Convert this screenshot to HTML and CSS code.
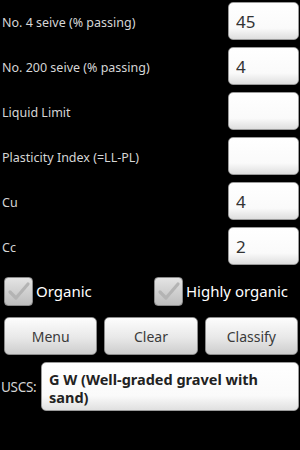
FILE: index.html
```html
<!DOCTYPE html>
<html lang="en">
<head>
    <meta charset="UTF-8">
    <meta name="viewport" content="width=device-width, initial-scale=1.0">
    <title>USCS Classifier</title>
    <link rel="stylesheet" href="styles.css">
</head>
<body>
    <div class="screen">
        <div class="fields">
            <div class="row">
                <label for="no4">No. 4 seive (% passing)</label>
                <input type="text" id="no4" value="45">
            </div>
            <div class="row">
                <label for="no200">No. 200 seive (% passing)</label>
                <input type="text" id="no200" value="4">
            </div>
            <div class="row">
                <label for="ll">Liquid Limit</label>
                <input type="text" id="ll" value="">
            </div>
            <div class="row">
                <label for="pi">Plasticity Index (=LL-PL)</label>
                <input type="text" id="pi" value="">
            </div>
            <div class="row">
                <label for="cu">Cu</label>
                <input type="text" id="cu" value="4">
            </div>
            <div class="row">
                <label for="cc">Cc</label>
                <input type="text" id="cc" value="2">
            </div>
        </div>

        <div class="checks">
            <div class="check">
                <span class="box">
                    <svg width="25" height="25" viewBox="0 0 25 25"><path d="M4 13 L10 19 L22 5" fill="none" stroke="#b4b4b4" stroke-width="3.2" stroke-linecap="round" stroke-linejoin="round"/></svg>
                </span>
                <span class="check-label">Organic</span>
            </div>
            <div class="check">
                <span class="box">
                    <svg width="25" height="25" viewBox="0 0 25 25"><path d="M4 13 L10 19 L22 5" fill="none" stroke="#b4b4b4" stroke-width="3.2" stroke-linecap="round" stroke-linejoin="round"/></svg>
                </span>
                <span class="check-label">Highly organic</span>
            </div>
        </div>

        <div class="buttons">
            <button>Menu</button>
            <button>Clear</button>
            <button>Classify</button>
        </div>

        <div class="result-row">
            <span class="result-label">USCS:</span>
            <div class="result">G W (Well-graded gravel with sand)</div>
        </div>
    </div>
</body>
</html>
```

FILE: styles.css
```css
body {
    margin: 0;
    background: #000;
    font-family: "Noto Sans", "Open Sans", sans-serif;
}
.screen {
    width: 300px;
    height: 450px;
    padding-top: 2px;
    box-sizing: border-box;
}
.fields {
    display: flex;
    flex-direction: column;
    gap: 7px;
}
.row {
    display: flex;
    justify-content: space-between;
    align-items: center;
    height: 38px;
}
.row label {
    margin-left: 2px;
    padding-top: 3px;
    color: #d6d6d6;
    font-size: 12.5px;
}
.row input {
    width: 71px;
    height: 38px;
    margin-right: 1px;
    box-sizing: border-box;
    border: 1px solid #9a9a9a;
    border-radius: 5px;
    background: linear-gradient(#ffffff 0%, #fafafa 70%, #dedede 100%);
    padding: 0 0 0 7px;
    font-family: "Noto Sans", "Open Sans", sans-serif;
    font-size: 17px;
    color: #333;
    outline: none;
}
.checks {
    display: flex;
    margin-top: 12px;
    height: 28px;
    align-items: center;
}
.check {
    display: flex;
    align-items: center;
    width: 151px;
    padding-left: 4px;
    box-sizing: border-box;
}
.box {
    width: 29px;
    height: 29px;
    box-sizing: border-box;
    border: 1px solid #8a8a8a;
    border-radius: 4px;
    background: linear-gradient(#e4e4e4, #bdbdbd);
    display: flex;
    align-items: center;
    justify-content: center;
}
.check-label {
    margin-left: 3px;
    color: #fff;
    font-size: 15px;
}
.buttons {
    display: flex;
    gap: 7px;
    margin-top: 12px;
    padding: 0 2px 0 4px;
}
.buttons button {
    flex: 1;
    height: 38px;
    border: 1px solid #8c8c8c;
    border-radius: 5px;
    background: linear-gradient(#fdfdfd 0%, #e8e8e8 55%, #cdcdcd 100%);
    font-family: "Noto Sans", "Open Sans", sans-serif;
    font-size: 14px;
    color: #3a3a3a;
}
.result-row {
    display: flex;
    align-items: center;
    margin-top: 7px;
}
.result-label {
    width: 41px;
    padding-left: 1px;
    box-sizing: border-box;
    color: #d6d6d6;
    font-size: 13.5px;
    letter-spacing: -0.3px;
}
.result {
    flex: 1;
    margin-right: 1px;
    min-height: 49px;
    box-sizing: border-box;
    border: 1px solid #9a9a9a;
    border-radius: 5px;
    background: linear-gradient(#ffffff 0%, #fafafa 70%, #e0e0e0 100%);
    padding: 7px 6px 3px 7px;
    font-size: 14.5px;
    font-weight: bold;
    line-height: 18px;
    color: #222;
}
```
